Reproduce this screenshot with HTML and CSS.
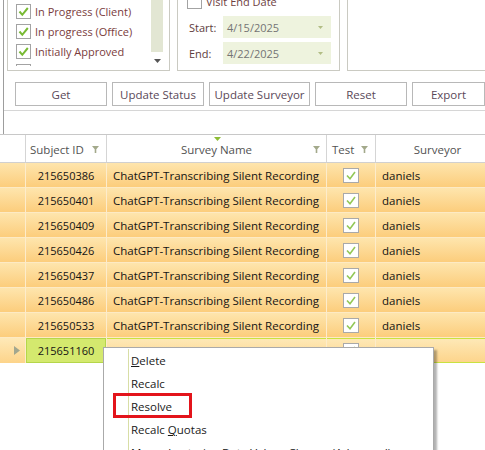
FILE: index.html
```html
<!DOCTYPE html>
<html>
<head>
<meta charset="utf-8">
<title>Survey Grid</title>
<link rel="stylesheet" href="styles.css">
</head>
<body>
<div class="screen">
  <div class="panel">
    <div class="groups">
      <div class="group status-group">
        <div class="list">
          <div class="list-items">
            <div class="item"><span class="chk"><svg viewBox="0 0 13 13" width="13" height="13"><path d="M2.5 6.5 L5.3 9.8 L10.8 3" fill="none" stroke="#78ba33" stroke-width="2"/></svg></span><span class="item-label">In Progress (Client)</span></div>
            <div class="item"><span class="chk"><svg viewBox="0 0 13 13" width="13" height="13"><path d="M2.5 6.5 L5.3 9.8 L10.8 3" fill="none" stroke="#78ba33" stroke-width="2"/></svg></span><span class="item-label">In progress (Office)</span></div>
            <div class="item"><span class="chk"><svg viewBox="0 0 13 13" width="13" height="13"><path d="M2.5 6.5 L5.3 9.8 L10.8 3" fill="none" stroke="#78ba33" stroke-width="2"/></svg></span><span class="item-label">Initially Approved</span></div>
            <div class="item"><span class="chk"></span><span class="item-label">Hold</span></div>
          </div>
          <div class="vscroll">
            <div class="thumb"></div>
            <svg class="scroll-arrow" viewBox="0 0 7 4" width="7" height="4"><path d="M0 0 H7 L3.5 4 Z" fill="#555"/></svg>
          </div>
        </div>
      </div>
      <div class="group date-group">
        <div class="date-toggle"><span class="chk"></span><span class="date-toggle-label">Visit End Date</span></div>
        <div class="date-row">
          <span class="date-label">Start:</span>
          <div class="date-input"><span>4/15/2025</span><svg viewBox="0 0 5 3" width="5" height="3"><path d="M0 0 H5 L2.5 3 Z" fill="#b2bd85"/></svg></div>
        </div>
        <div class="date-row">
          <span class="date-label">End:</span>
          <div class="date-input"><span>4/22/2025</span><svg viewBox="0 0 5 3" width="5" height="3"><path d="M0 0 H5 L2.5 3 Z" fill="#b2bd85"/></svg></div>
        </div>
      </div>
      <div class="group blank-group"></div>
    </div>
    <div class="buttons">
      <div class="btn w92">Get</div>
      <div class="btn w92">Update Status</div>
      <div class="btn w101">Update Surveyor</div>
      <div class="btn w92">Reset</div>
      <div class="btn w73">Export</div>
    </div>
    <div class="grid-top"></div>
  </div>

  <div class="grid">
    <div class="grid-header">
      <div class="hcell"></div>
      <div class="hcell h-left"><span>Subject ID</span><svg class="funnel" viewBox="0 0 7 7" width="7" height="7"><path d="M0 0 H7 L4.3 3.2 V7 H2.7 V3.2 Z" fill="#a3a98b"/></svg></div>
      <div class="hcell h-center">
        <svg class="sort" viewBox="0 0 7 4" width="7" height="4"><path d="M0 0 H7 L3.5 4 Z" fill="#8dbd35"/></svg>
        <span></span><span>Survey Name</span><svg class="funnel end" viewBox="0 0 7 7" width="7" height="7"><path d="M0 0 H7 L4.3 3.2 V7 H2.7 V3.2 Z" fill="#a3a98b"/></svg>
      </div>
      <div class="hcell h-left test-h"><span>Test</span><svg class="funnel" viewBox="0 0 7 7" width="7" height="7"><path d="M0 0 H7 L4.3 3.2 V7 H2.7 V3.2 Z" fill="#a3a98b"/></svg></div>
      <div class="hcell h-plain">Surveyor</div>
    </div>

    <div class="row"><div class="cell ind"></div><div class="cell id">215650386</div><div class="cell name">ChatGPT-Transcribing Silent Recording</div><div class="cell test"><span class="gchk"><svg viewBox="0 0 14 13" width="14" height="13"><path d="M3 6.5 L6 9.8 L11 3" fill="none" stroke="#93c856" stroke-width="1.6"/></svg></span></div><div class="cell who">daniels</div></div>
    <div class="row"><div class="cell ind"></div><div class="cell id">215650401</div><div class="cell name">ChatGPT-Transcribing Silent Recording</div><div class="cell test"><span class="gchk"><svg viewBox="0 0 14 13" width="14" height="13"><path d="M3 6.5 L6 9.8 L11 3" fill="none" stroke="#93c856" stroke-width="1.6"/></svg></span></div><div class="cell who">daniels</div></div>
    <div class="row"><div class="cell ind"></div><div class="cell id">215650409</div><div class="cell name">ChatGPT-Transcribing Silent Recording</div><div class="cell test"><span class="gchk"><svg viewBox="0 0 14 13" width="14" height="13"><path d="M3 6.5 L6 9.8 L11 3" fill="none" stroke="#93c856" stroke-width="1.6"/></svg></span></div><div class="cell who">daniels</div></div>
    <div class="row"><div class="cell ind"></div><div class="cell id">215650426</div><div class="cell name">ChatGPT-Transcribing Silent Recording</div><div class="cell test"><span class="gchk"><svg viewBox="0 0 14 13" width="14" height="13"><path d="M3 6.5 L6 9.8 L11 3" fill="none" stroke="#93c856" stroke-width="1.6"/></svg></span></div><div class="cell who">daniels</div></div>
    <div class="row"><div class="cell ind"></div><div class="cell id">215650437</div><div class="cell name">ChatGPT-Transcribing Silent Recording</div><div class="cell test"><span class="gchk"><svg viewBox="0 0 14 13" width="14" height="13"><path d="M3 6.5 L6 9.8 L11 3" fill="none" stroke="#93c856" stroke-width="1.6"/></svg></span></div><div class="cell who">daniels</div></div>
    <div class="row"><div class="cell ind"></div><div class="cell id">215650486</div><div class="cell name">ChatGPT-Transcribing Silent Recording</div><div class="cell test"><span class="gchk"><svg viewBox="0 0 14 13" width="14" height="13"><path d="M3 6.5 L6 9.8 L11 3" fill="none" stroke="#93c856" stroke-width="1.6"/></svg></span></div><div class="cell who">daniels</div></div>
    <div class="row"><div class="cell ind"></div><div class="cell id">215650533</div><div class="cell name">ChatGPT-Transcribing Silent Recording</div><div class="cell test"><span class="gchk"><svg viewBox="0 0 14 13" width="14" height="13"><path d="M3 6.5 L6 9.8 L11 3" fill="none" stroke="#93c856" stroke-width="1.6"/></svg></span></div><div class="cell who">daniels</div></div>
    <div class="row selected"><div class="cell ind"><svg class="row-arrow" viewBox="0 0 6 9" width="6" height="9"><path d="M0 0 L6 4.5 L0 9 Z" fill="#a2a78f"/></svg></div><div class="cell id">215651160</div><div class="cell name">ChatGPT-Transcribing Silent Recording</div><div class="cell test"><span class="gchk"><svg viewBox="0 0 14 13" width="14" height="13"><path d="M3 6.5 L6 9.8 L11 3" fill="none" stroke="#93c856" stroke-width="1.6"/></svg></span></div><div class="cell who">daniels</div></div>
  </div>

  <div class="context-menu">
    <div class="menu-item"><span class="gutter"></span><span class="menu-label"><u>D</u>elete</span></div>
    <div class="menu-item"><span class="gutter"></span><span class="menu-label">Recalc</span></div>
    <div class="menu-item"><span class="gutter"></span><span class="menu-label">Resolve</span></div>
    <div class="menu-item"><span class="gutter"></span><span class="menu-label">Recalc <u>Q</u>uotas</span></div>
    <div class="menu-item"><span class="gutter"></span><span class="menu-label">Manual entering Data Values Change (Advanced)</span></div>
    <div class="highlight"></div>
  </div>
</div>
</body>
</html>
```

FILE: styles.css
```css
html, body {
  margin: 0;
  padding: 0;
}
body {
  width: 485px;
  height: 450px;
  overflow: hidden;
  background: #ffffff;
  font-family: "Open Sans", "Noto Sans", "DejaVu Sans", sans-serif;
  font-size: 11px;
}
.screen {
  position: relative;
  width: 485px;
  height: 450px;
  overflow: hidden;
}

/* top panel */
.panel {
  margin-left: 3px;
  border-left: 1px solid #9d9d9d;
  height: 134px;
  box-sizing: border-box;
  overflow: hidden;
}
.groups {
  display: flex;
  gap: 7px;
  padding-left: 3px;
  margin-top: -20px;
  height: 91px;
}
.group {
  box-sizing: border-box;
  height: 91px;
  border: 1px solid #cacac2;
  flex: none;
}
.status-group {
  width: 163px;
  display: flex;
  flex-direction: column;
  justify-content: flex-end;
  padding-bottom: 4px;
}
.list {
  display: flex;
  height: 85px;
  overflow: hidden;
}
.list-items {
  width: 143px;
  padding-top: 20px;
  box-sizing: border-box;
}
.item {
  display: flex;
  align-items: center;
  height: 20px;
  padding-left: 8px;
}
.chk {
  width: 15px;
  height: 15px;
  box-sizing: border-box;
  border: 1px solid #a3a3a3;
  background: #ffffff;
  display: inline-flex;
  flex: none;
}
.item-label {
  margin-left: 4px;
  color: #7a3c3c;
  white-space: nowrap;
}
.vscroll {
  width: 12px;
  display: flex;
  flex-direction: column;
  align-items: center;
}
.thumb {
  width: 12px;
  height: 71px;
  background: #e2e6d3;
}
.scroll-arrow {
  margin-top: 7px;
}

.date-group {
  width: 163px;
  display: flex;
  flex-direction: column;
  justify-content: flex-end;
  padding: 0 0 6px 9px;
}
.date-toggle {
  display: flex;
  align-items: center;
  height: 19px;
  margin-bottom: 5px;
}
.date-toggle-label {
  margin-left: 4px;
  color: #6e3f3f;
}
.date-row {
  display: flex;
  align-items: center;
  height: 22px;
}
.date-row + .date-row {
  margin-top: 4px;
}
.date-label {
  width: 34px;
  margin-left: 2px;
  color: #5e3c3c;
}
.date-input {
  width: 108px;
  height: 22px;
  background: #eef3de;
  display: flex;
  align-items: center;
  justify-content: space-between;
  padding: 0 8px 0 4px;
  box-sizing: border-box;
  color: #747474;
}
.blank-group {
  width: 160px;
}

.buttons {
  display: flex;
  gap: 5px;
  margin-top: 11px;
  padding-left: 11px;
}
.btn {
  flex: none;
  height: 24px;
  box-sizing: border-box;
  border: 1px solid #b8b8b8;
  background: #ffffff;
  color: #5a4858;
  font-size: 11.5px;
  display: flex;
  align-items: center;
  justify-content: center;
}
.w92 { width: 92px; }
.w101 { width: 101px; }
.w73 { width: 73px; }
.grid-top {
  margin-top: 4px;
  border-top: 1px solid #d6d6d6;
}

/* grid */
.grid {
  width: 520px;
}
.grid-header,
.row {
  display: grid;
  grid-template-columns: 26px 81px 220px 49px 144px;
}
.grid-header {
  height: 29px;
  box-sizing: border-box;
  border-top: 1px solid #c8c8c8;
  border-bottom: 1px solid #d0d0d0;
}
.hcell {
  position: relative;
  border-right: 1px solid #d5d5d5;
  color: #525252;
  font-size: 11.5px;
  display: flex;
  align-items: center;
  padding-top: 2px;
  box-sizing: border-box;
  white-space: nowrap;
}
.h-left {
  justify-content: space-between;
  padding-left: 4px;
  padding-right: 7px;
}
.test-h {
  padding-left: 5px;
}
.h-center {
  display: grid;
  grid-template-columns: 1fr auto 1fr;
  align-items: center;
}
.h-center .funnel.end {
  justify-self: end;
  margin-right: 6px;
}
.h-plain {
  justify-content: center;
  padding-right: 20px;
}
.sort {
  position: absolute;
  top: 2px;
  left: 107px;
}

.row {
  height: 25px;
}
.cell {
  box-sizing: border-box;
  height: 25px;
  background: linear-gradient(#fee5ad, #fccd7c);
  border-right: 1px solid #fdeccb;
  border-bottom: 1px solid #fdeac4;
  display: flex;
  align-items: center;
  color: #141414;
  white-space: nowrap;
  overflow: hidden;
}
.cell.id {
  justify-content: center;
}
.cell.name {
  font-size: 11.5px;
  padding-left: 6px;
}
.cell.who {
  padding-left: 6px;
  font-size: 11.5px;
}
.cell.test {
  justify-content: center;
}
.gchk {
  width: 16px;
  height: 15px;
  box-sizing: border-box;
  border: 1px solid #a9a9a9;
  background: #ffffff;
  display: inline-flex;
  align-items: center;
  justify-content: center;
}
.row.selected .cell {
  background: linear-gradient(#fee9b8, #fdd48a);
  border-bottom: none;
}
.row.selected .cell:not(.ind) {
  box-shadow: inset 0 1px 0 #c9e240, inset 0 -1px 0 #c9e240;
}
.row.selected .cell.id {
  background: #d4e96e;
  box-shadow: inset 0 0 0 1px #b5d64a;
}
.cell.ind {
  padding-left: 14px;
}

/* context menu */
.context-menu {
  position: absolute;
  left: 103px;
  top: 347px;
  width: 331px;
  height: 130px;
  box-sizing: border-box;
  border: 1px solid #aaaaaa;
  background: #ffffff;
  padding-top: 1px;
  box-shadow: 3px 3px 2px rgba(0, 0, 0, 0.3);
}
.menu-item {
  display: flex;
  align-items: center;
  height: 23px;
}
.gutter {
  width: 24px;
  height: 23px;
  border-right: 1px solid #d8dea6;
  flex: none;
}
.menu-label {
  padding-left: 2px;
  color: #1a1a1a;
  font-size: 11.5px;
  white-space: nowrap;
}
.menu-label u {
  text-underline-offset: 1px;
}
.highlight {
  position: absolute;
  left: 9px;
  top: 45px;
  width: 79px;
  height: 25px;
  box-sizing: border-box;
  border: 3px solid #e3141b;
}
```
